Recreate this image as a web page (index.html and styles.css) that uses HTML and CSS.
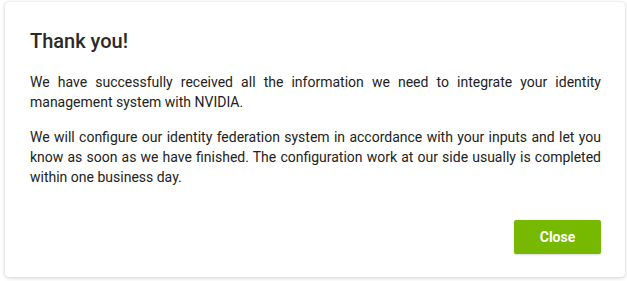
FILE: index.html
```html
<!DOCTYPE html>
<html lang="en">
<head>
<meta charset="utf-8">
<title>Thank you</title>
<link rel="stylesheet" href="styles.css">
</head>
<body>
<div class="page">
  <div class="card">
    <h2 class="title">Thank you!</h2>
    <p class="text">We have successfully received all the information we need to integrate your identity management system with NVIDIA.</p>
    <p class="text">We will configure our identity federation system in accordance with your inputs and let you know as soon as we have finished. The configuration work at our side usually is completed within one business day.</p>
    <div class="actions">
      <button class="btn" type="button">Close</button>
    </div>
  </div>
</div>
</body>
</html>
```
FILE: styles.css
```css
html, body {
  margin: 0;
  padding: 0;
  background: #ffffff;
}
.page {
  padding: 2px 2px 4px 5px;
  font-family: Roboto, "Liberation Sans", Arial, sans-serif;
}
.card {
  background: #ffffff;
  border-radius: 4px;
  box-shadow: 0 1px 4px rgba(0, 0, 0, 0.18), 0 0 1px rgba(0, 0, 0, 0.12);
  padding: 27px 24px 23px 25px;
}
.title {
  margin: 0 0 19px;
  font-size: 20px;
  line-height: 24px;
  font-weight: 500;
  color: #2a2a2a;
}
.text {
  margin: 0 0 15px;
  font-size: 14px;
  line-height: 20px;
  color: #222222;
  text-align: justify;
}
.text:last-of-type {
  margin-bottom: 0;
}
.actions {
  display: flex;
  justify-content: flex-end;
  margin-top: 33px;
}
.btn {
  width: 87px;
  height: 34px;
  border: none;
  border-radius: 2px;
  background: #76b900;
  color: #ffffff;
  font-family: Roboto, "Liberation Sans", Arial, sans-serif;
  font-size: 14px;
  font-weight: 700;
  box-shadow: 0 1px 2px rgba(0, 0, 0, 0.15);
  cursor: pointer;
}
```
